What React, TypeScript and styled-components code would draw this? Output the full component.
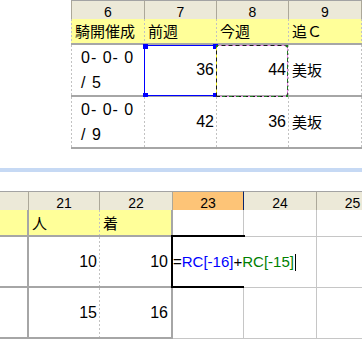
import React from 'react';
import styled, { createGlobalStyle, css } from 'styled-components';

const GRID_LINE = '#a6a6a6';
const DASH = '#c2c2c2';
const THIN = '#c6c6c6';
const HEAD_BG = '#ece9d8';
const HEAD_DIV = '#aca899';
const YELLOW = '#ffff99';
const FONT = '"Liberation Sans", "Noto Sans CJK JP", sans-serif';

const Global = createGlobalStyle`
  html, body { margin: 0; padding: 0; background: #ffffff; }
  body {
    width: 362px;
    height: 340px;
    overflow: hidden;
    font-family: ${FONT};
    color: #000;
  }
  #root { width: 362px; height: 340px; }
`;

type Edge = 'dash' | 'thick' | 'thin' | 'none';
type Bottom = 'thick' | 'thin';

const Screen = styled.div`
  width: 362px;
  height: 340px;
  overflow: hidden;
  display: flex;
  flex-direction: column;
  background: #fff;
`;

const TopPane = styled.section`
  flex: none;
  height: 168px;
  box-sizing: border-box;
  padding-left: 71px;
  overflow: hidden;
`;

const Splitter = styled.div`
  flex: none;
  height: 4px;
  background: #c6d9f4;
`;

const BottomPane = styled.section`
  flex: 1;
  padding-top: 19px;
  overflow: hidden;
`;

const Sheet = styled.div`
  display: flex;
  flex-direction: column;
  width: max-content;
`;

const Row = styled.div<{ $cols: string; $h: number }>`
  display: grid;
  grid-template-columns: ${(p) => p.$cols};
  height: ${(p) => p.$h}px;
`;

const HeadCell = styled.div<{ $active?: boolean; $first?: boolean }>`
  box-sizing: border-box;
  height: 100%;
  background: ${(p) => (p.$active ? '#fdc477' : HEAD_BG)};
  border-top: 1px solid #a3a3a3;
  border-bottom: 1px solid ${(p) => (p.$active ? '#0a246a' : '#cdc9b8')};
  border-right: 1px solid ${(p) => (p.$active ? '#0a246a' : HEAD_DIV)};
  ${(p) => p.$first && css`border-left: 1px solid ${HEAD_DIV};`}
  font-family: ${FONT};
  font-size: 14px;
  line-height: 17px;
  padding-top: 3px;
  text-align: center;
  color: #000;
  overflow: visible;
`;

const dashRight = `linear-gradient(to bottom, ${DASH} 50%, transparent 50%)`;

const Cell = styled.div<{
  $bg?: string;
  $right?: Edge;
  $bottom?: Bottom;
  $align?: 'left' | 'right';
  $leadDash?: boolean;
}>`
  position: relative;
  box-sizing: border-box;
  height: 100%;
  display: flex;
  align-items: center;
  justify-content: ${(p) => (p.$align === 'right' ? 'flex-end' : 'flex-start')};
  padding: 0 3px;
  background-color: ${(p) => p.$bg ?? '#ffffff'};
  ${(p) => {
    const imgs: string[] = [];
    const pos: string[] = [];
    if (p.$right === 'dash') {
      imgs.push(dashRight);
      pos.push('right top');
    }
    if (p.$leadDash) {
      imgs.push(dashRight);
      pos.push('left top');
    }
    if (!imgs.length) return '';
    return css`
      background-image: ${imgs.join(', ')};
      background-size: 1px 4px;
      background-repeat: repeat-y;
      background-position: ${pos.join(', ')};
    `;
  }}
  border-right: ${(p) =>
    p.$right === 'thick'
      ? `2px solid ${GRID_LINE}`
      : p.$right === 'thin'
      ? `1px solid ${THIN}`
      : 'none'};
  border-bottom: ${(p) =>
    p.$bottom === 'thin' ? `1px solid ${THIN}` : `2px solid ${GRID_LINE}`};
  white-space: nowrap;
  color: #000;
`;

const Label = styled.span<{ $indent?: number }>`
  font-family: "Noto Sans CJK JP", sans-serif;
  font-size: 15px;
  line-height: 20px;
  padding-left: ${(p) => p.$indent ?? 0}px;
`;

const Num = styled.span`
  font-family: ${FONT};
  font-size: 16px;
  line-height: 20px;
`;

const Record = styled.span`
  display: block;
  font-family: ${FONT};
  font-size: 16px;
  line-height: 25px;
  letter-spacing: 1px;
  padding-left: 7px;
  white-space: pre;
`;

const Selection = styled.span`
  position: absolute;
  left: -1px;
  top: 0;
  width: 73px;
  height: 51px;
  box-sizing: border-box;
  border: 1px solid #0000ff;
  pointer-events: none;
`;

const Handle = styled.span<{ $x: number; $y: number }>`
  position: absolute;
  width: 5px;
  height: 5px;
  background: #0000ff;
  left: ${(p) => p.$x}px;
  top: ${(p) => p.$y}px;
`;

const Marquee = styled.svg`
  position: absolute;
  left: -1px;
  top: 0;
  pointer-events: none;
`;

const ActiveFrame = styled.span`
  position: absolute;
  left: -2px;
  top: -2px;
  width: 74px;
  height: 53px;
  box-sizing: border-box;
  border-left: 2px solid #000;
  border-top: 2px solid #000;
  border-bottom: 2px solid #000;
  pointer-events: none;
`;

const FillHandle = styled.span`
  position: absolute;
  left: 68px;
  top: 49px;
  width: 5px;
  height: 4px;
  background: #000;
`;

const Formula = styled.span`
  display: flex;
  align-items: center;
  font-family: ${FONT};
  font-size: 15px;
  line-height: 20px;
  margin-left: -3px;
  position: relative;
  z-index: 1;
`;

const Token = styled.span<{ $c?: string }>`
  color: ${(p) => p.$c ?? '#000'};
`;

const Caret = styled.span`
  display: inline-block;
  width: 1px;
  height: 17px;
  background: #000;
  margin-left: 1px;
`;

const TOP_COLS = '74px 72px 72px 73px';
const BOT_COLS = '29px 71px 73px 71px 73px 72px';

const MARQUEE_PATH =
  'M0.5 51.5 V0.5 H68.5 Q71.5 0.5 71.5 3.5 V48.5 Q71.5 51.5 68.5 51.5 H0.5';

const TopSheet = () => (
  <Sheet>
    <Row $cols={TOP_COLS} $h={19}>
      <HeadCell $first>6</HeadCell>
      <HeadCell>7</HeadCell>
      <HeadCell>8</HeadCell>
      <HeadCell>9</HeadCell>
    </Row>
    <Row $cols={TOP_COLS} $h={26}>
      <Cell $bg={YELLOW} $right="dash" $leadDash>
        <Label $indent={1}>騎開催成</Label>
      </Cell>
      <Cell $bg={YELLOW} $right="dash">
        <Label>前週</Label>
      </Cell>
      <Cell $bg={YELLOW} $right="dash">
        <Label>今週</Label>
      </Cell>
      <Cell $bg={YELLOW} $right="dash">
        <Label>追Ｃ</Label>
      </Cell>
    </Row>
    <Row $cols={TOP_COLS} $h={52}>
      <Cell $right="dash" $leadDash>
        <Record>
          {'0- 0- 0'}
          <br />
          {'/ 5'}
        </Record>
      </Cell>
      <Cell $right="dash" $align="right">
        <Num>36</Num>
        <Selection />
        <Handle $x={-2} $y={-1} />
        <Handle $x={68} $y={-1} />
        <Handle $x={-2} $y={48} />
        <Handle $x={68} $y={48} />
      </Cell>
      <Cell $right="dash" $align="right">
        <Num>44</Num>
        <Marquee width="72" height="52" viewBox="0 0 72 52">
          <path d={MARQUEE_PATH} fill="none" stroke="#e98be9" />
          <path d="M0.5 0.5 V51.5" fill="none" stroke="#f0f020" />
          <path
            d={MARQUEE_PATH}
            fill="none"
            stroke="#1a1a1a"
            strokeDasharray="4 3"
          />
          <path d="M71.5 6 V46 M6 51.5 H66" fill="none" stroke="#1f7f1f" strokeDasharray="3 4" />
          <rect x="0" y="0" width="2" height="2" fill="#1b7a1b" />
          <rect x="70" y="0" width="2" height="2" fill="#1b7a1b" />
          <rect x="70" y="50" width="2" height="2" fill="#1b7a1b" />
        </Marquee>
      </Cell>
      <Cell $right="dash">
        <Label>美坂</Label>
      </Cell>
    </Row>
    <Row $cols={TOP_COLS} $h={51}>
      <Cell $right="dash" $leadDash>
        <Record>
          {'0- 0- 0'}
          <br />
          {'/ 9'}
        </Record>
      </Cell>
      <Cell $right="dash" $align="right">
        <Num>42</Num>
      </Cell>
      <Cell $right="dash" $align="right">
        <Num>36</Num>
      </Cell>
      <Cell $right="dash">
        <Label>美坂</Label>
      </Cell>
    </Row>
  </Sheet>
);

const BottomSheet = () => (
  <Sheet>
    <Row $cols={BOT_COLS} $h={19}>
      <HeadCell />
      <HeadCell>21</HeadCell>
      <HeadCell>22</HeadCell>
      <HeadCell $active>23</HeadCell>
      <HeadCell>24</HeadCell>
      <HeadCell>25</HeadCell>
    </Row>
    <Row $cols={BOT_COLS} $h={27}>
      <Cell $bg={YELLOW} $right="thick" />
      <Cell $bg={YELLOW} $right="dash">
        <Label>人</Label>
      </Cell>
      <Cell $bg={YELLOW} $right="thick">
        <Label>着</Label>
      </Cell>
      <Cell $right="thin" $bottom="thin" />
      <Cell $right="thin" $bottom="thin" />
      <Cell $right="thin" $bottom="thin" />
    </Row>
    <Row $cols={BOT_COLS} $h={51}>
      <Cell $right="thick" />
      <Cell $right="dash" $align="right">
        <Num>10</Num>
      </Cell>
      <Cell $right="thick" $align="right">
        <Num>10</Num>
      </Cell>
      <Cell $right="none" $bottom="thin">
        <ActiveFrame />
        <FillHandle />
        <Formula>
          <Token>=</Token>
          <Token $c="#0000ff">RC[-16]</Token>
          <Token>+</Token>
          <Token $c="#008000">RC[-15]</Token>
          <Caret />
        </Formula>
      </Cell>
      <Cell $right="thin" $bottom="thin" />
      <Cell $right="thin" $bottom="thin" />
    </Row>
    <Row $cols={BOT_COLS} $h={51}>
      <Cell $right="thick" />
      <Cell $right="dash" $align="right">
        <Num>15</Num>
      </Cell>
      <Cell $right="thick" $align="right">
        <Num>16</Num>
      </Cell>
      <Cell $right="thin" $bottom="thin" />
      <Cell $right="thin" $bottom="thin" />
      <Cell $right="thin" $bottom="thin" />
    </Row>
  </Sheet>
);

export default function App() {
  return (
    <>
      <Global />
      <Screen>
        <TopPane>
          <TopSheet />
        </TopPane>
        <Splitter />
        <BottomPane>
          <BottomSheet />
        </BottomPane>
      </Screen>
    </>
  );
}
